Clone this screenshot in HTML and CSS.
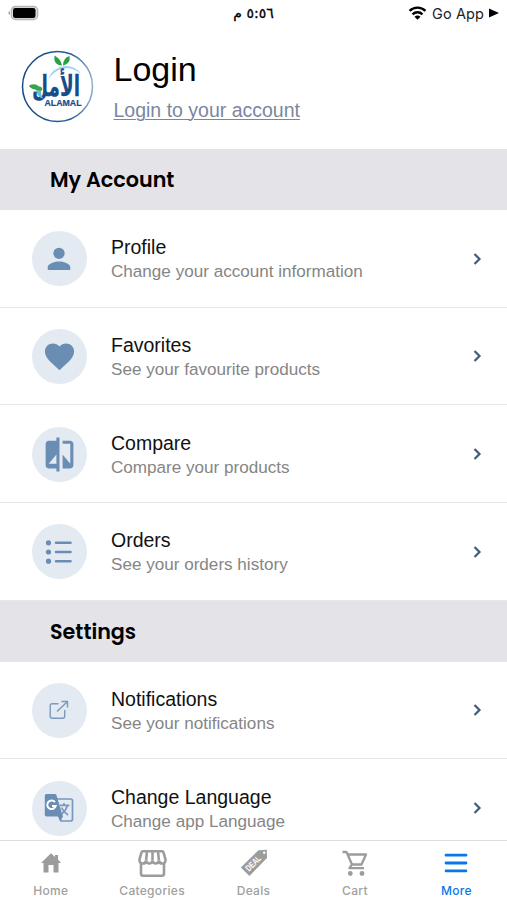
FILE: index.html
```html
<!DOCTYPE html>
<html lang="en">
<head>
<meta charset="utf-8">
<title>More</title>
<link rel="stylesheet" href="styles.css">
</head>
<body>
<div class="app">
  <div class="status">
    <svg class="battery" width="32" height="16" viewBox="0 0 32 16"><path d="M2 6v4Q.3 9.500.3 8T2 6" fill="#aaa"/><rect x="3.300" y="1.500" width="26.400" height="13" rx="4" fill="#ddd" stroke="#b5b5b5" stroke-width="1.300"/><rect x="5" y="3" width="22.500" height="10" rx="2.300"/></svg>
    <span class="time" dir="rtl">٥:٥٦ م</span>
    <span class="carrier">
      <svg width="19" height="14" viewBox="0 0 20 15"><g fill="none" stroke="#000" stroke-width="2.600"><path d="M1.500 5.300a12 12 0 0 1 17 0"/><path d="M4.700 8.900a7.500 7.500 0 0 1 10.600 0"/></g><path d="M10 14.800l-3.200-3.200a4.500 4.500 0 0 1 6.400 0z"/></svg>
      <span class="carrier-name">Go App</span>
      <svg width="10" height="10" viewBox="0 0 10 10"><path d="M0 .5v9L10 5z"/></svg>
    </span>
  </div>

  <header class="header">
    <svg class="logo" width="73" height="73" viewBox="0 0 73 73">
      <defs><linearGradient id="ring" x1="0" x2="1"><stop offset="0" stop-color="#164a85"/><stop offset=".7" stop-color="#2b5e98"/><stop offset="1" stop-color="#8fabc9"/></linearGradient></defs>
      <circle cx="36.500" cy="36.500" r="35" fill="#fff" stroke="url(#ring)" stroke-width="1.500"/>
      <path d="M27 30Q31 18 43 16Q54 15 60 24Q52 17 43 18.500Q33 20 27 30" fill="#9bd5ef"/>
      <path d="M41 15.500Q40 9 33.500 5.500Q32 15 41 15.500M42 15.500Q42 8 48.500 6Q50 14 42 15.500" fill="#27a243"/>
      <text class="logo-ar" transform="translate(59 46) scale(.84 1.320)" text-anchor="start" direction="rtl">الأمل</text>
      <path d="M15 40.500h5q-.5 6 3 8q-6 0-8-8" fill="#66bbe3"/>
      <path d="M8 35.500q6-3 10 1q4 0 3 4q-4 1-7-1q-5-1-6-4" fill="#35a64a"/>
      <text class="logo-en" x="23.500" y="56" textLength="37" lengthAdjust="spacingAndGlyphs">ALAMAL</text>
    </svg>
    <div class="header-text">
      <h1 class="login">Login</h1>
      <a class="login-link">Login to your account</a>
    </div>
  </header>

  <main class="content">
    <h2 class="section">My Account</h2>
    <div class="row">
      <div class="badge"><svg width="30" height="30" viewBox="0 0 24 24"><circle cx="12" cy="7.400" r="4.500"/><path d="M3 20.800v-2.300c0-3 6-4.500 9-4.500s9 1.500 9 4.500v2.300z"/></svg></div>
      <div class="info"><div class="title">Profile</div><div class="sub">Change your account information</div></div>
      <svg class="chevron" width="9" height="14" viewBox="0 0 9 14"><path d="M1.500 2l5 5-5 5"/></svg>
    </div>
    <div class="row">
      <div class="badge"><svg width="35" height="35" viewBox="0 0 24 24"><path d="M12 21.350l-1.450-1.320C5.400 15.360 2 12.280 2 8.500 2 5.420 4.420 3 7.500 3c1.740 0 3.410.81 4.500 2.090C13.090 3.810 14.760 3 16.500 3 19.580 3 22 5.420 22 8.500c0 3.780-3.400 6.860-8.550 11.540z"/></svg></div>
      <div class="info"><div class="title">Favorites</div><div class="sub">See your favourite products</div></div>
      <svg class="chevron" width="9" height="14" viewBox="0 0 9 14"><path d="M1.500 2l5 5-5 5"/></svg>
    </div>
    <div class="row">
      <div class="badge"><svg width="37" height="37" viewBox="0 0 24 24"><path d="M10 3H5c-1.100 0-2 .9-2 2v14c0 1.100.9 2 2 2h5v2h2V1h-2v2zm0 15H5l5-6v6zm9-15h-5v2h5v13l-5-6v9h5c1.100 0 2-.9 2-2V5c0-1.100-.9-2-2-2z"/></svg></div>
      <div class="info"><div class="title">Compare</div><div class="sub">Compare your products</div></div>
      <svg class="chevron" width="9" height="14" viewBox="0 0 9 14"><path d="M1.500 2l5 5-5 5"/></svg>
    </div>
    <div class="row">
      <div class="badge"><svg width="28" height="26" viewBox="0 0 28 26"><circle cx="3.500" cy="3.800" r="2.600"/><circle cx="3.500" cy="13" r="2.600"/><circle cx="3.500" cy="22.200" r="2.600"/><path d="M11 3.800h14.500M11 13h14.500M11 22.200h14.500" stroke="#6a8db4" stroke-width="2.600" stroke-linecap="round"/></svg></div>
      <div class="info"><div class="title">Orders</div><div class="sub">See your orders history</div></div>
      <svg class="chevron" width="9" height="14" viewBox="0 0 9 14"><path d="M1.500 2l5 5-5 5"/></svg>
    </div>
    <h2 class="section">Settings</h2>
    <div class="row">
      <div class="badge"><svg width="20" height="20" viewBox="0 0 20 20"><path d="M9.500 3.800H3.200Q1.200 3.800 1.200 5.800v10.500q0 2 2 2h10.500q2 0 2-2V10M12.500 1.500H18.500v6M18.300 1.700L8 11.500" fill="none" stroke="#789abe" stroke-width="1.400"/></svg></div>
      <div class="info"><div class="title">Notifications</div><div class="sub">See your notifications</div></div>
      <svg class="chevron" width="9" height="14" viewBox="0 0 9 14"><path d="M1.500 2l5 5-5 5"/></svg>
    </div>
    <div class="row">
      <div class="badge"><svg width="30" height="30" viewBox="0 0 30 30"><path d="M12 6h14.500q2 0 2 2v18q0 2-2 2H17z" fill="#e4eaf2" stroke="#7898bd" stroke-width="1.700"/><path d="M2.500 1H11q1 0 1.400 1L19 23.500H2.500Q.8 23.500.8 21.800V2.700Q.8 1 2.500 1zM14 23.500h5L16 28z"/><path d="M11 9.200A4.300 4.300 0 1 0 11.700 13H8" fill="none" stroke="#fff" stroke-width="2"/><path d="M16 12.300h9.500M20 10v2.300M23.500 12.500q-1.500 5-6 8.500M17.500 14.500q2 4.500 6.500 7.500" fill="none" stroke="#7898bd" stroke-width="1.700"/></svg></div>
      <div class="info"><div class="title">Change Language</div><div class="sub">Change app Language</div></div>
      <svg class="chevron" width="9" height="14" viewBox="0 0 9 14"><path d="M1.500 2l5 5-5 5"/></svg>
    </div>
  </main>

  <nav class="tabs">
    <div class="tab"><div class="tab-icon"><svg width="20" height="20" viewBox="0 0 20 20"><path d="M10 .3L14 3.900V2h3v4.500L20 10h-2.500v9.500h-5V12h-5v7.500h-5V10H0z"/></svg></div><span>Home</span></div>
    <div class="tab"><div class="tab-icon"><svg width="29" height="27" viewBox="0 0 29 27"><path d="M5 1.300h19q1.300 0 1.600 1.300L27.500 9.500q.2 4-3.300 4-3 0-3.300-3-.5 3-3.200 3t-3.200-3q-.5 3-3.200 3t-3.200-3q-.3 3-3.300 3-3.500 0-3.300-4L3.400 2.600Q3.700 1.300 5 1.300zM9 1.500L8.100 10M14.500 1.500V10M20 1.500l.9 8.500M3 13v10.500Q3 25.700 5 25.700h19q2 0 2-2.200V13" fill="none" stroke="#9c9c9c" stroke-width="2.600"/></svg></div><span>Categories</span></div>
    <div class="tab"><div class="tab-icon"><svg class="deal-icon" width="28" height="28" viewBox="0 0 28 28"><path d="M18.500 1.200L26.800.8 27 9 9.500 27 .8 18.500z"/><circle cx="24.200" cy="3.800" r="1.200" fill="#fff"/><text class="deal" transform="translate(9 22.800) rotate(-45)" textLength="18" lengthAdjust="spacingAndGlyphs">DEAL</text></svg></div><span>Deals</span></div>
    <div class="tab"><div class="tab-icon"><svg width="26" height="27" viewBox="0 0 26 27"><path d="M.5 2H4.500L10 14.500h9.500L24 4.500H6M9.800 14.500L7.500 18.200H22" fill="none" stroke="#9c9c9c" stroke-width="2.300" stroke-linejoin="round"/><circle cx="8.300" cy="23.500" r="2.400"/><circle cx="20" cy="23.500" r="2.400"/></svg></div><span>Cart</span></div>
    <div class="tab active"><div class="tab-icon"><svg width="24" height="20" viewBox="0 0 24 20"><path d="M2 2.200h20M2 10h20M2 17.800h20" stroke="#0878e8" stroke-width="2.800" stroke-linecap="round"/></svg></div><span>More</span></div>
  </nav>
</div>
</body>
</html>
```
FILE: styles.css
```css
* { box-sizing: border-box; }
body { margin: 0; background: #fff; color: #000; font-family: "Liberation Sans", Arial, sans-serif; }
.app { width: 507px; height: 900px; display: flex; flex-direction: column; overflow: hidden; }
.status { height: 27px; flex: none; display: grid; grid-template-columns: 1fr auto 1fr; align-items: center; padding: 0 8px; font-family: Inter, "DejaVu Sans", sans-serif; }
.battery { margin-top: -2px; }
.time { font-size: 14px; font-family: "DejaVu Sans", sans-serif; font-weight: 500; line-height: 20px; margin-top: -1px; -webkit-text-stroke: .3px #000; }
.carrier { display: flex; justify-content: flex-end; align-items: center; gap: 5px; margin-top: -1px; }
.carrier-name { font-size: 14.500px; letter-spacing: .1px; color: #222; }
.header { height: 122px; flex: none; display: flex; align-items: flex-start; padding: 23px 20px 0 20.500px; }
.header-text { margin-left: 20px; margin-top: -1px; }
.login { margin: 0; font-size: 34px; font-weight: 400; line-height: 40px; }
.login-link { display: block; font-size: 19.500px; line-height: 24px; margin-top: 9px; color: #7a879f; text-decoration: underline; text-decoration-thickness: 1px; text-underline-offset: 2px; }
.logo { flex: none; }
.logo-ar { font: bold 22px "DejaVu Sans", sans-serif; fill: #174c89; stroke: #174c89; stroke-width: .2px; }
.logo-en { font: bold 8.500px "Liberation Sans", sans-serif; fill: #174c89; stroke: #174c89; stroke-width: .2px; }
.content { flex: 1; min-height: 0; overflow: hidden; }
.section { margin: 0; height: 60.800px; padding: 0 50px; background: #e4e3e8; font-family: Poppins, Inter, sans-serif; font-size: 20.700px; font-weight: 600; line-height: 61px; }
.row { height: 97.750px; display: flex; align-items: center; padding: 1px 25px 0 31.500px; border-bottom: 1.500px solid #e7e7e9; }
.badge { width: 55px; height: 55px; border-radius: 50%; background: #e4eaf2; display: flex; align-items: center; justify-content: center; fill: #6a8db4; }
.info { flex: 1; margin-left: 24.500px; padding-top: 2px; }
.title { font-size: 19.500px; line-height: 24px; color: #111; }
.sub { font-size: 17.100px; line-height: 25px; color: #858585; }
.chevron { fill: none; stroke: #435b7c; stroke-width: 2.200; }
.tabs { height: 60px; flex: none; display: flex; border-top: 1px solid #dedee0; background: #fff; }
.tab { flex: 1; display: flex; flex-direction: column; align-items: center; fill: #9c9c9c; color: #a0a0a0; font: 500 12px/15px Inter, sans-serif; letter-spacing: .3px; }
.tab-icon { height: 28px; margin: 8px 0 6px; display: flex; align-items: center; justify-content: center; }
.deal-icon { overflow: visible; }
.deal { font: bold 9px "Liberation Sans", sans-serif; fill: #fff; letter-spacing: 0; }
.active { color: #0878e8; }
```
